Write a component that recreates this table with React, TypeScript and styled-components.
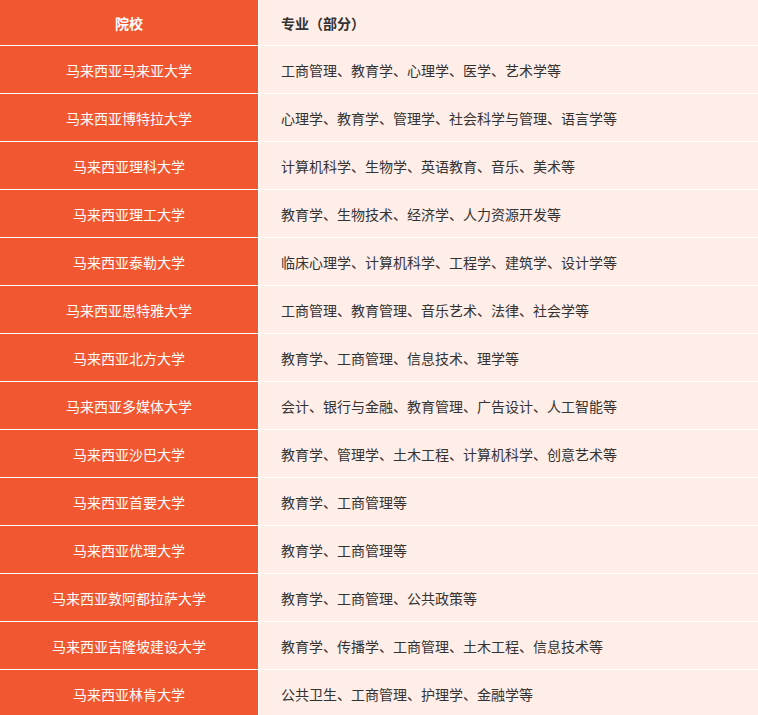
import React from 'react'
import styled, { createGlobalStyle } from 'styled-components'

const GlobalStyle = createGlobalStyle`
  html, body {
    margin: 0;
    padding: 0;
    background: #ffffff;
  }
  body {
    font-family: "Noto Sans CJK SC", "Microsoft YaHei", sans-serif;
  }
`

interface Row {
  school: string
  majors: string
}

const rows: Row[] = [
  { school: '马来西亚马来亚大学', majors: '工商管理、教育学、心理学、医学、艺术学等' },
  { school: '马来西亚博特拉大学', majors: '心理学、教育学、管理学、社会科学与管理、语言学等' },
  { school: '马来西亚理科大学', majors: '计算机科学、生物学、英语教育、音乐、美术等' },
  { school: '马来西亚理工大学', majors: '教育学、生物技术、经济学、人力资源开发等' },
  { school: '马来西亚泰勒大学', majors: '临床心理学、计算机科学、工程学、建筑学、设计学等' },
  { school: '马来西亚思特雅大学', majors: '工商管理、教育管理、音乐艺术、法律、社会学等' },
  { school: '马来西亚北方大学', majors: '教育学、工商管理、信息技术、理学等' },
  { school: '马来西亚多媒体大学', majors: '会计、银行与金融、教育管理、广告设计、人工智能等' },
  { school: '马来西亚沙巴大学', majors: '教育学、管理学、土木工程、计算机科学、创意艺术等' },
  { school: '马来西亚首要大学', majors: '教育学、工商管理等' },
  { school: '马来西亚优理大学', majors: '教育学、工商管理等' },
  { school: '马来西亚敦阿都拉萨大学', majors: '教育学、工商管理、公共政策等' },
  { school: '马来西亚吉隆坡建设大学', majors: '教育学、传播学、工商管理、土木工程、信息技术等' },
  { school: '马来西亚林肯大学', majors: '公共卫生、工商管理、护理学、金融学等' },
]

const Table = styled.div`
  display: grid;
  grid-template-columns: 258px 1fr;
  column-gap: 1px;
  row-gap: 1px;
  width: 758px;
  background: #ffffff;
`

const SchoolCell = styled.div<{ $head?: boolean }>`
  height: ${(p) => (p.$head ? 45 : 47)}px;
  display: flex;
  align-items: center;
  justify-content: center;
  background: #f15731;
  color: #ffffff;
  font-size: 14px;
  font-weight: ${(p) => (p.$head ? 700 : 400)};
`

const MajorCell = styled.div<{ $head?: boolean }>`
  height: ${(p) => (p.$head ? 45 : 47)}px;
  display: flex;
  align-items: center;
  padding-left: 22px;
  background: #ffede8;
  color: #333333;
  font-size: 14px;
  font-weight: ${(p) => (p.$head ? 700 : 400)};
`

export default function App() {
  return (
    <>
      <GlobalStyle />
      <Table>
        <SchoolCell $head>院校</SchoolCell>
        <MajorCell $head>专业（部分）</MajorCell>
        {rows.map((r) => (
          <React.Fragment key={r.school}>
            <SchoolCell>{r.school}</SchoolCell>
            <MajorCell>{r.majors}</MajorCell>
          </React.Fragment>
        ))}
      </Table>
    </>
  )
}
